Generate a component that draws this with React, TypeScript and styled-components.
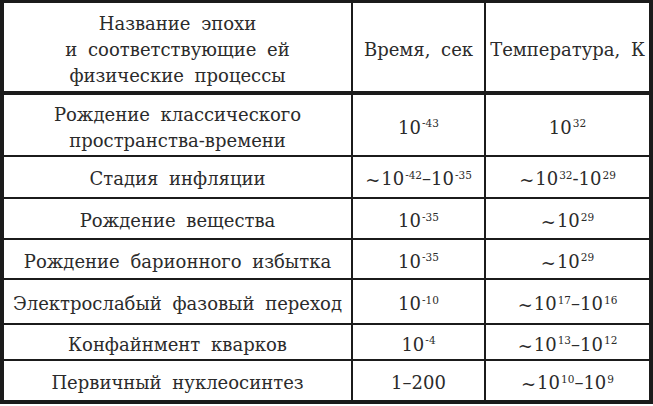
import React from "react";
import styled, { createGlobalStyle } from "styled-components";

const Global = createGlobalStyle`
  html, body { margin: 0; padding: 0; background: #ffffff; }
  body { width: 653px; height: 406px; overflow: hidden; font-family: 'DejaVu Serif', serif; }
`;

const Table = styled.table`
  width: 653px;
  height: 404px;
  border-collapse: collapse;
  table-layout: fixed;
  border: 4px solid #1b1b1b;
  border-top-width: 3px;
  color: #2b2b2b;
`;

const Row = styled.tr<{ $h: number; $head?: boolean }>`
  height: ${(p) => p.$h}px;
  border-bottom: ${(p) => (p.$head ? 4 : 2)}px solid #1b1b1b;
`;

const Cell = styled.td<{ $text?: boolean }>`
  padding: 5px 0 0;
  text-align: center;
  vertical-align: middle;
  border-left: 2px solid #1b1b1b;
  font-family: 'DejaVu Serif', serif;
  font-size: 18px;
  line-height: 26px;
  letter-spacing: 0;
  word-spacing: ${(p) => (p.$text ? "5px" : "0")};
  font-weight: 400;
  white-space: nowrap;
  &:first-child { border-left: none; }
`;

const Sup = styled.sup`
  font-size: 10.5px;
  line-height: 0;
  position: relative;
  top: 0;
  vertical-align: 0.6em;
  margin-left: 1px;
`;

const Tilde = styled.span`
  display: inline-block;
  transform: translateY(1px);
  margin-right: 1px;
`;

type Pow = { base: string; exp: string };
const P = ({ base, exp }: Pow) => (
  <>
    {base}
    <Sup>{exp}</Sup>
  </>
);

const rows: { name: React.ReactNode; h: number; time: React.ReactNode; temp: React.ReactNode }[] = [
  {
    name: (
      <>
        Рождение классического
        <br />
        пространства-времени
      </>
    ),
    h: 57,
    time: <P base="10" exp="-43" />,
    temp: <P base="10" exp="32" />,
  },
  {
    name: "Стадия инфляции",
    h: 40,
    time: (
      <>
        <Tilde>~</Tilde>
        <P base="10" exp="-42" />–<P base="10" exp="-35" />
      </>
    ),
    temp: (
      <>
        <Tilde>~</Tilde>
        <P base="10" exp="32" />-<P base="10" exp="29" />
      </>
    ),
  },
  {
    name: "Рождение вещества",
    h: 40,
    time: <P base="10" exp="-35" />,
    temp: (
      <>
        <Tilde>~</Tilde>
        <P base="10" exp="29" />
      </>
    ),
  },
  {
    name: "Рождение барионного избытка",
    h: 38,
    time: <P base="10" exp="-35" />,
    temp: (
      <>
        <Tilde>~</Tilde>
        <P base="10" exp="29" />
      </>
    ),
  },
  {
    name: "Электрослабый фазовый переход",
    h: 43,
    time: <P base="10" exp="-10" />,
    temp: (
      <>
        <Tilde>~</Tilde>
        <P base="10" exp="17" />–<P base="10" exp="16" />
      </>
    ),
  },
  {
    name: "Конфайнмент кварков",
    h: 35,
    time: <P base="10" exp="-4" />,
    temp: (
      <>
        <Tilde>~</Tilde>
        <P base="10" exp="13" />–<P base="10" exp="12" />
      </>
    ),
  },
  {
    name: "Первичный нуклеосинтез",
    h: 40,
    time: "1–200",
    temp: (
      <>
        <Tilde>~</Tilde>
        <P base="10" exp="10" />–<P base="10" exp="9" />
      </>
    ),
  },
];

export default function App() {
  return (
    <>
      <Global />
      <Table>
        <colgroup>
          <col style={{ width: 350 }} />
          <col style={{ width: 133 }} />
          <col />
        </colgroup>
        <tbody>
          <Row $h={88} $head>
            <Cell $text>
              Название эпохи
              <br />и соответствующие ей
              <br />
              физические процессы
            </Cell>
            <Cell $text>Время, сек</Cell>
            <Cell $text>Температура, К</Cell>
          </Row>
          {rows.map((r, i) => (
            <Row key={i} $h={r.h}>
              <Cell $text>{r.name}</Cell>
              <Cell>{r.time}</Cell>
              <Cell>{r.temp}</Cell>
            </Row>
          ))}
        </tbody>
      </Table>
    </>
  );
}
